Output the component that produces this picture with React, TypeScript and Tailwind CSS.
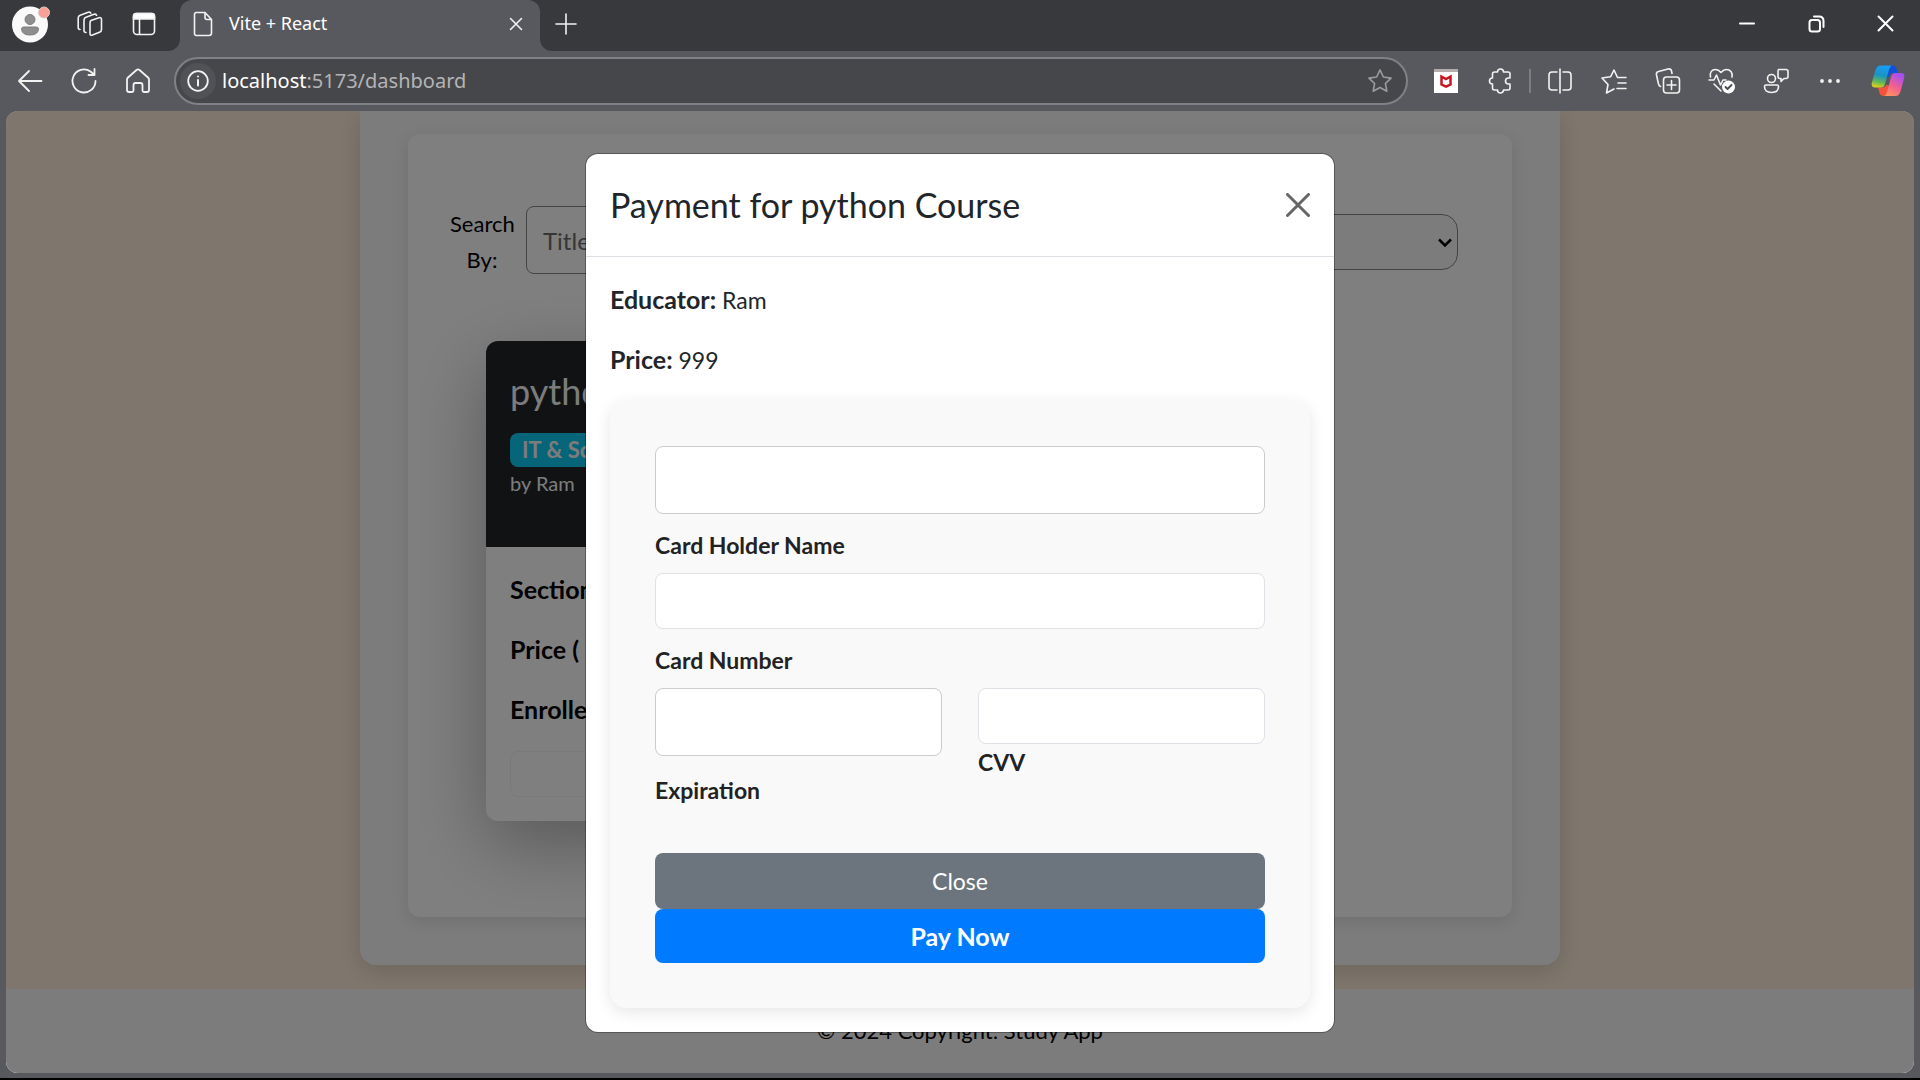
import React from "react";

const S = { fill: "none", stroke: "#f2f2f2", strokeWidth: 1.6, strokeLinecap: "round", strokeLinejoin: "round" } as const;

function IconButton({ label, className = "", children }: { label: string; className?: string; children: React.ReactNode }) {
  return (
    <button type="button" aria-label={label} className={"flex h-9 w-9 shrink-0 items-center justify-center " + className}>
      {children}
    </button>
  );
}

function TabStrip() {
  return (
    <header className="flex h-[51px] shrink-0 items-stretch bg-[#58595e]">
      <div className="flex w-[180px] items-center rounded-br-xl bg-[#38393c] pb-1 pl-3">
        <IconButton label="Profile">
          <svg width="40" height="44" viewBox="0 0 40 44" className="shrink-0">
            <circle cx="20" cy="22.500" r="18" fill="#fafafa" />
            <circle cx="20" cy="17.500" r="5" fill="#8e8e8e" stroke="#7c7c7c" />
            <path d="M14 25h12q2.500 0 2.500 2-.500 6-8.500 6t-8.500-6q0-2 2.500-2z" fill="#8e8e8e" stroke="#7c7c7c" />
            <circle cx="34" cy="10.500" r="5.500" fill="#f8a097" stroke="#d9c9c7" strokeWidth="1" />
          </svg>
        </IconButton>
        <IconButton label="Workspaces" className="ml-6">
          <svg width="26" height="26" viewBox="0 0 26 26" {...S}>
            <path d="M14 9.500l8-2.800q2.500-.700 2.500 1.800v10q0 2-2 2.800l-7 2.700q-2.500 1-2.500-1.500V12q0-1.800 1-2.500z" />
            <path d="M9 21.500q-2 0-2-2V9q0-2 2-2.700l8-3q2-.600 2.500 1M3 18.500q-1.800 0-1.800-2V7q0-2 2-2.700l8-3q2-.600 2.500.800" />
          </svg>
        </IconButton>
        <IconButton label="Tab actions" className="ml-[18px]">
          <svg width="24" height="24" viewBox="0 0 24 24" {...S}>
            <rect x="1.500" y="1.500" width="21" height="21" rx="3.500" />
            <path d="M1.500 7V4q0-2.500 2.500-2.500h16q2.500 0 2.500 2.500v3z" fill="#fff" />
            <path d="M7.500 7v15" />
          </svg>
        </IconButton>
      </div>
      <div className="w-[360px] bg-[#38393c]">
        <div className="flex h-full items-center rounded-t-xl bg-[#58595e] pb-1 pl-[13px] pr-1.5">
          <svg width="20" height="26" viewBox="0 0 20 26" {...S}>
            <path d="M3.500 1.500h8.500l6.500 7v13.500q0 2.500-2.500 2.500H3.500q-2 0-2-2v-19q0-2 2-2zM12 1.500v5q0 2 2 2h4.500" />
          </svg>
          <span className="ml-4 flex-1 text-[18px] text-white">Vite + React</span>
          <IconButton label="Close tab">
            <svg width="14" height="14" viewBox="0 0 14 14" {...S}><path d="M1.500 1.500l11 11m0-11l-11 11" /></svg>
          </IconButton>
        </div>
      </div>
      <div className="flex flex-1 items-center justify-between rounded-bl-xl bg-[#38393c] pb-1 pl-2 pr-[17px]">
        <IconButton label="New tab">
          <svg width="22" height="22" viewBox="0 0 22 22" {...S}><path d="M11 1v20M1 11h20" /></svg>
        </IconButton>
        <div className="flex items-center gap-[33px]">
          <IconButton label="Minimize">
            <svg width="16" height="16" viewBox="0 0 16 16" {...S} stroke="#fff" strokeWidth="2"><path d="M1 7.500h14" /></svg>
          </IconButton>
          <IconButton label="Restore">
            <svg width="17" height="18" viewBox="0 0 17 18" {...S} stroke="#fff" strokeWidth="2">
              <rect x="1.500" y="5" width="10.500" height="11.500" rx="2.500" />
              <path d="M6 1.500h5q4.500 0 4.500 4.500v6" />
            </svg>
          </IconButton>
          <IconButton label="Close window">
            <svg width="17" height="17" viewBox="0 0 17 17" {...S} stroke="#fff" strokeWidth="2"><path d="M1.500 1.500l14 14m0-14l-14 14" /></svg>
          </IconButton>
        </div>
      </div>
    </header>
  );
}

function Toolbar() {
  return (
    <nav className="flex h-[60px] shrink-0 items-center bg-[#58595e] pl-3 pr-[14px]">
      <IconButton label="Back">
        <svg width="26" height="24" viewBox="0 0 26 24" {...S} strokeWidth="1.800"><path d="M24.500 12H2M12 2L2 12l10 10" /></svg>
      </IconButton>
      <IconButton label="Refresh" className="ml-[18px]">
        <svg width="26" height="26" viewBox="0 0 26 26" {...S} strokeWidth="1.800"><path d="M24.500 13A11.500 11.500 0 1 1 19.500 3.500L23 6.500M23.500 1v6h-6" /></svg>
      </IconButton>
      <IconButton label="Home" className="ml-[18px]">
        <svg width="24" height="26" viewBox="0 0 24 26" {...S} strokeWidth="1.800">
          <path d="M10.500 2q1.500-1.200 3 0L22 9.500q1 1 1 2V22q0 2-2 2h-3q-1.500 0-1.500-1.500V17q0-2-2-2h-5q-2 0-2 2v5.500Q7.500 24 6 24H3q-2 0-2-2V11.500q0-1 1-2z" />
        </svg>
      </IconButton>
      <div className="ml-[18px] flex h-12 flex-1 items-center rounded-full border-2 border-[#808186] bg-[#46474a] pl-1 pr-2">
        <span className="flex h-9 w-9 shrink-0 items-center justify-center rounded-full bg-[#515256]">
          <svg width="22" height="22" viewBox="0 0 22 22" {...S} strokeWidth="1.800">
            <circle cx="11" cy="11" r="9.800" /><path d="M11 10v5.500M11 6.500v.100" strokeWidth="2" />
          </svg>
        </span>
        <button type="button" className="ml-1.5 flex-1 text-left text-[20px] text-[#b4b4b6]">
          <span className="text-white">localhost</span>:5173/dashboard
        </button>
        <IconButton label="Add to favorites">
          <svg width="26" height="26" viewBox="0 0 24 24" {...S} stroke="#9b9b9e" strokeWidth="1.500"><path d="M12 1.800l3.100 6.500 7.100 1-5.200 5 1.300 7.100L12 18l-6.300 3.400L7 14.300l-5.200-5 7.100-1z" /></svg>
        </IconButton>
      </div>
      <div className="flex items-center gap-[18px] pl-5">
        <IconButton label="McAfee">
          <svg width="24" height="24" viewBox="0 0 24 24">
            <path d="M0 0h24v24H0z" fill="#fff" /><path d="M0 0h24v3H0z" fill="#b5adab" />
            <path d="M7.500 7.500v8l4.500 2.200 4.500-2.200v-8L12 10z" fill="none" stroke="#c9151b" strokeWidth="2.500" />
          </svg>
        </IconButton>
        <IconButton label="Extensions">
          <svg width="24" height="26" viewBox="0 0 24 26" {...S}>
            <path d="M9.500 4a3 3 0 0 1 6 0h4.500q2 0 2 2v4h-1.500a3 3 0 0 0 0 6H22v4q0 2-2 2h-4.500a3 3 0 0 1-6 0H6.500q-2 0-2-2v-4a3 3 0 0 1 0-6V6q0-2 2-2z" />
          </svg>
        </IconButton>
        <div className="-mx-[7px] h-6 w-[2px] bg-[#7d7e82]" />
        <IconButton label="Split screen">
          <svg width="24" height="26" viewBox="0 0 24 26" {...S}><path d="M9 4H4Q1 4 1 7v12q0 3 3 3h5M15 4h5q3 0 3 3v12q0 3-3 3h-5M12 1v24" /></svg>
        </IconButton>
        <IconButton label="Favorites">
          <svg width="26" height="26" viewBox="0 0 26 26" {...S}><path d="M23 9.500h-6.500L13 2 9.500 8.800 1 10l6 6.500-1.500 8.500 7.500-4M17 15h8M16 20.500h9M16.500 9.500H25" /></svg>
        </IconButton>
        <IconButton label="Collections">
          <svg width="26" height="26" viewBox="0 0 26 26" {...S}>
            <rect x="8.500" y="9" width="16" height="16" rx="3" /><path d="M16.500 12.500v9M12 17h9M5.500 18.500Q4 18 3.500 16L1.500 7q-.500-3 2-3.500L13 1q3-.500 3.500 2l.500 2.500" />
          </svg>
        </IconButton>
        <IconButton label="Browser essentials">
          <svg width="28" height="26" viewBox="0 0 28 26" {...S}>
            <path d="M2.500 9C1.500 4 4 1.500 7.500 1.500q3 0 5.500 3 2.500-3 5.500-3C22 1.500 25 4.500 24 9M1 12h5l2.500-5 4 10 2.500-5h3M6 16l7 7" />
            <circle cx="20.500" cy="19" r="6.500" fill="#fff" stroke="none" /><path d="M17.500 19l2 2 4-4" stroke="#48494d" strokeWidth="1.800" />
          </svg>
        </IconButton>
        <IconButton label="Feedback">
          <svg width="26" height="26" viewBox="0 0 26 26" {...S}>
            <circle cx="8.500" cy="10.500" r="4" /><path d="M3 17h11q1.500 0 1.500 1.500 0 6-7 6t-7-6Q1.500 17 3 17zM15.500 1.500H23q2 0 2 2v5q0 2-2 2h-2l-3 3v-3h-1q-2 0-2-2v-5q0-2 .500-2z" />
          </svg>
        </IconButton>
        <IconButton label="Settings and more">
          <svg width="22" height="6" viewBox="0 0 22 6" fill="#f2f2f2"><circle cx="3" cy="3" r="1.900" /><circle cx="11" cy="3" r="1.900" /><circle cx="19" cy="3" r="1.900" /></svg>
        </IconButton>
        <IconButton label="Copilot" className="ml-1">
          <svg width="34" height="32" viewBox="0 0 34 32" className="shrink-0">
            <defs>
              <linearGradient id="cpA" x1=".3" y1="0" x2=".1" y2="1"><stop offset="0" stopColor="#199cf2" /><stop offset=".4" stopColor="#1a93c4" /><stop offset=".7" stopColor="#5fb85c" /><stop offset="1" stopColor="#f5d412" /></linearGradient>
              <linearGradient id="cpB" x1=".1" y1="1" x2=".6" y2="0"><stop offset="0" stopColor="#ff9a5a" /><stop offset=".5" stopColor="#f25f90" /><stop offset="1" stopColor="#a650f2" /></linearGradient>
            </defs>
            <path d="M16 .500h6q2.500 0 3.500 3L27 8h-5q-3 0-4 4l-3-1z" fill="#1450d6" />
            <path d="M18 31h-5.500q-3 0-4-3L7 22.500h4.500q3 0 4-3l4 2z" fill="#f4523a" />
            <path d="M9.500.500H21q-2 .500-3 4L14 19q-1 3.500-4 3.500H4.500Q-.500 22.500 1 17L4.500 5Q6 .500 9.500.500z" fill="url(#cpA)" />
            <path d="M24.500 31H13q2-.500 3-4l4-15q1-4 4-4h5.500q5 0 3.500 5.500l-3.500 13Q28 31 24.500 31z" fill="url(#cpB)" />
          </svg>
        </IconButton>
      </div>
    </nav>
  );
}

function Dashboard() {
  return (
    <main className="flex min-h-0 flex-1 flex-col bg-[#ffeeda] text-[24px] leading-9 text-black">
      <div className="mx-auto mb-6 flex w-full max-w-[1200px] flex-1 rounded-b-2xl bg-[#f8f8f8] px-12 pt-[23px] pb-12 shadow-[0_6px_24px_rgba(0,0,0,0.15)]">
        <section className="flex-1 rounded-xl bg-white px-[42px] pt-[72px] shadow-[0_4px_16px_rgba(0,0,0,0.1)]">
          <div className="flex items-start justify-between">
            <div className="flex items-start">
              <label htmlFor="title" className="w-[64px] text-center text-[22px]">Search By:</label>
              <input id="title" placeholder="Title" className="ml-3 h-[68px] w-[300px] rounded-lg border border-[#888] px-4 placeholder:text-[#6c6c6c]" />
            </div>
            <div className="relative mt-2 mr-3">
              <select aria-label="Category" className="h-14 w-[300px] appearance-none rounded-2xl border border-[#888] bg-[#f8f8f8]">
                <option></option>
              </select>
              <svg width="14" height="10" viewBox="0 0 14 10" fill="none" stroke="#000" strokeWidth="2.500" className="pointer-events-none absolute top-6 right-1.5"><path d="M1 1.500l6 6 6-6" /></svg>
            </div>
          </div>
          <article className="mt-[63px] ml-9 w-[420px] rounded-xl bg-white shadow-[0_24px_72px_rgba(0,0,0,0.3)]">
            <div className="h-[206px] rounded-t-xl bg-[#212529] px-6 pt-7 text-[#f8f8f8]">
              <h2 className="text-[36px] leading-[44px]">python</h2>
              <span className="mt-5 block h-[34px] w-fit rounded-lg bg-[#0dcaf0] px-3 text-[22px] leading-[33px] font-bold">IT &amp; Software</span>
              <p className="text-[20px] leading-8">by Ram</p>
            </div>
            <div className="flex flex-col gap-6 px-6 pt-6 pb-6 text-[25px] font-bold">
              <p>Sections</p>
              <p>Price (</p>
              <p>Enrolled</p>
              <button type="button" aria-label="Open course" className="h-[46px] rounded-lg border border-[#f3f3f3]" />
            </div>
          </article>
        </section>
      </div>
      <footer className="h-[84px] shrink-0 bg-[#f8f8f8] pt-6 text-center text-[22px]">© 2024 Copyright: Study App</footer>
    </main>
  );
}

function Field({ id, label, tall = false, space = "mt-[13px]" }: { id: string; label: string; tall?: boolean; space?: string }) {
  return (
    <div className="flex min-w-0 flex-1 flex-col">
      <input id={id} className={"w-full rounded-lg border bg-white px-4 " + (tall ? "h-[68px] border-[#ccc]" : "h-14 border-[#dee2e6]")} />
      <label htmlFor={id} className={"text-[23px] leading-9 font-bold text-[#222] " + space}>{label}</label>
    </div>
  );
}

function PaymentDialog() {
  return (
    <div className="absolute inset-0 flex items-start justify-center bg-black/50">
      <div role="dialog" aria-labelledby="pay-title" className="mt-[43px] w-full max-w-[748px] rounded-xl bg-white text-[23px] leading-9 text-[#212529] ring-1 ring-black/30">
        <div className="flex h-[103px] items-center justify-between border-b border-[#dee2e6] px-6">
          <h1 id="pay-title" className="text-[34px]">Payment for python Course</h1>
          <button type="button" aria-label="Close dialog">
            <svg width="24" height="24" viewBox="0 0 24 24" fill="none" stroke="#666" strokeWidth="3" strokeLinecap="round"><path d="M1.500 1.500l21 21m0-21l-21 21" /></svg>
          </button>
        </div>
        <div className="flex flex-col gap-6 p-6">
          <p className="h-9"><b className="text-[25px]">Educator:</b> Ram</p>
          <p className="h-9"><b className="text-[25px]">Price:</b> 999</p>
          <form className="rounded-2xl bg-[#f9f9f9] p-[45px] shadow-[0_4px_16px_rgba(0,0,0,0.1)]">
            <div className="flex flex-col gap-2.5">
              <Field id="holder" label="Card Holder Name" tall />
              <Field id="number" label="Card Number" />
              <div className="flex gap-9">
                <Field id="expiry" label="Expiration" tall space="mt-4" />
                <Field id="cvv" label="CVV" space="mt-0" />
              </div>
            </div>
            <button type="button" className="mt-[45px] block h-14 w-full rounded-lg bg-[#6c757d] text-white">Close</button>
            <button type="submit" className="block h-[54px] w-full rounded-lg bg-[#007bff] text-[25px] font-bold text-white">Pay Now</button>
          </form>
        </div>
      </div>
    </div>
  );
}

export default function App() {
  return (
    <div className="flex h-screen flex-col overflow-hidden border-b-2 border-black bg-[#58595e] font-['Noto_Sans',sans-serif]">
      <TabStrip />
      <Toolbar />
      <div className="relative mx-1.5 mb-[5px] flex min-h-0 flex-1 flex-col overflow-hidden rounded-xl font-['Lato',sans-serif]">
        <Dashboard />
        <PaymentDialog />
      </div>
    </div>
  );
}
